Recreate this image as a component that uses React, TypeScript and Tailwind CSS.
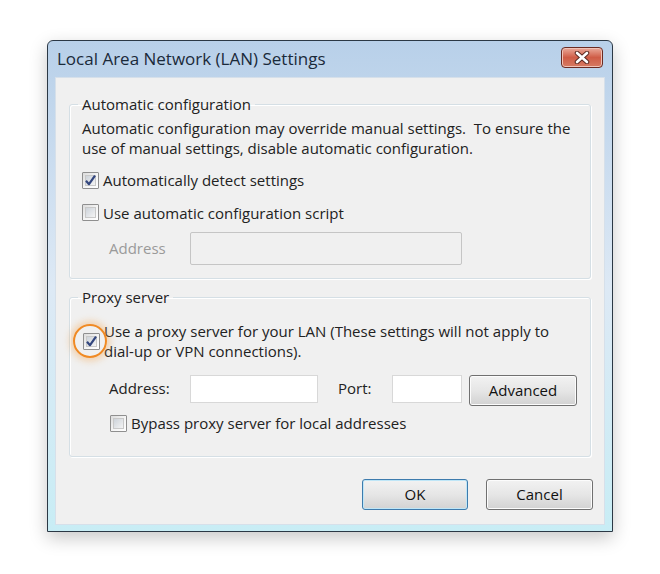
import React from "react";

function Check({ checked }: { checked?: boolean }) {
  return (
    <span className="flex h-[17px] w-[17px] shrink-0 items-center justify-center rounded-[1px] border border-[#8f8f8f] bg-gradient-to-br from-[#dcdcdc] via-[#f4f4f4] to-[#ffffff] p-[2px]">
      <span className="flex h-full w-full items-center justify-center border border-[#c9c9c9] bg-gradient-to-br from-[#cdd3da] to-[#f4f4f4]">
        {checked && (
          <svg width="13" height="13" viewBox="0 0 13 13" className="shrink-0">
            <path
              d="M2 6.8 L5 10.2 L11 1.6"
              fill="none"
              stroke="#33467e"
              strokeWidth="2.2"
              strokeLinejoin="round"
            />
          </svg>
        )}
      </span>
    </span>
  );
}

function WinButton({
  label,
  primary,
  className,
}: {
  label: string;
  primary?: boolean;
  className?: string;
}) {
  return (
    <div
      className={`flex items-center justify-center rounded-[3px] border ${
        primary
          ? "border-[#3d7bad] shadow-[inset_0_0_0_1px_#bfe6f7]"
          : "border-[#707070] shadow-[inset_0_0_0_1px_#fcfcfc]"
      } bg-gradient-to-b from-[#f2f2f2] via-[#e6e6e6] to-[#d2d2d2] text-[#111] ${className}`}
    >
      {label}
    </div>
  );
}

function GroupBox({
  title,
  className,
  children,
}: {
  title: string;
  className?: string;
  children: React.ReactNode;
}) {
  return (
    <fieldset
      className={`rounded-[3px] border border-[#d5dfe5] shadow-[inset_1px_1px_0_#ffffff,1px_1px_0_#ffffff] ${className}`}
    >
      <legend className="ml-[-4px] px-[4px] leading-[20px]">{title}</legend>
      {children}
    </fieldset>
  );
}

export default function App() {
  return (
    <div className="h-[574px] w-[660px] bg-white pl-[47px] pt-[40px] font-['Open_Sans',sans-serif] text-[15px] text-[#222]">
      <div className="flex h-[492px] w-[566px] flex-col rounded-t-[6px] border border-[#2b3845] bg-gradient-to-b from-[#b8d0e9] via-[#dde9f5] to-[#c8edf5] px-[7px] pb-[6px] shadow-[0_6px_18px_rgba(0,0,0,0.22)]">
        <div className="flex h-[36px] items-center justify-between">
          <span className="pl-[2px] text-[17px] text-[#1a2a3a]">
            Local Area Network (LAN) Settings
          </span>
          <div className="mr-[2px] mt-[-3px] flex h-[21px] w-[42px] items-center justify-center rounded-[4px] border border-[#6b2b22] bg-gradient-to-b from-[#e9a99a] via-[#cf5c46] to-[#d67a62] shadow-[inset_0_0_0_1px_#f1c2b6]">
            <svg width="16" height="13" viewBox="0 0 16 13">
              <path
                d="M3 2 L13 11 M13 2 L3 11"
                stroke="#5a2a22"
                strokeWidth="4.5"
                strokeLinecap="round"
              />
              <path
                d="M3 2 L13 11 M13 2 L3 11"
                stroke="#ffffff"
                strokeWidth="2.6"
                strokeLinecap="round"
              />
            </svg>
          </div>
        </div>

        <div className="flex flex-1 flex-col border border-[#d6e0ea] bg-[#f0f0f0] px-[13px] pt-[16px]">
          <GroupBox title="Automatic configuration" className="h-[185px] px-[12px]">
            <p className="mt-[4px] leading-[20px]">
              Automatic configuration may override manual settings.&nbsp; To ensure the
              use of manual settings, disable automatic configuration.
            </p>
            <div className="mt-[11px] flex items-center gap-[4px]">
              <Check checked />
              <span>Automatically detect settings</span>
            </div>
            <div className="mt-[10px] flex items-center gap-[4px]">
              <Check />
              <span>Use automatic configuration script</span>
            </div>
            <div className="mt-[8px] flex items-center">
              <span className="w-[108px] pl-[27px] text-[#9a9a9a]">Address</span>
              <div className="h-[33px] w-[272px] rounded-[2px] border border-[#c5c5c5] bg-[#f0f0f0]" />
            </div>
          </GroupBox>

          <GroupBox title="Proxy server" className="mt-[8px] h-[170px] px-[12px]">
            <div className="mt-[14px] flex items-center gap-[4px]">
              <div className="relative ml-[1px]">
                <Check checked />
                <div className="absolute left-[-10px] top-[-9px] h-[34px] w-[34px] rounded-full border-2 border-[#f08a24] shadow-[0_0_7px_3px_rgba(245,160,70,0.4)]" />
              </div>
              <p className="leading-[20px]">
                Use a proxy server for your LAN (These settings will not apply to
                dial-up or VPN connections).
              </p>
            </div>
            <div className="mt-[10px] flex items-center">
              <span className="w-[108px] pl-[27px]">Address:</span>
              <div className="h-[28px] w-[128px] border border-[#d8d8d8] bg-white" />
              <span className="ml-[20px] w-[54px]">Port:</span>
              <div className="h-[28px] w-[70px] border border-[#d8d8d8] bg-white" />
              <WinButton label="Advanced" className="ml-[7px] mt-[4px] h-[31px] w-[108px]" />
            </div>
            <div className="mt-[6px] flex items-center gap-[4px] pl-[28px]">
              <Check />
              <span>Bypass proxy server for local addresses</span>
            </div>
          </GroupBox>

          <div className="mr-[-2px] mt-[22px] flex justify-end gap-[18px]">
            <WinButton label="OK" primary className="h-[31px] w-[106px]" />
            <WinButton label="Cancel" className="h-[31px] w-[107px]" />
          </div>
        </div>
      </div>
    </div>
  );
}
